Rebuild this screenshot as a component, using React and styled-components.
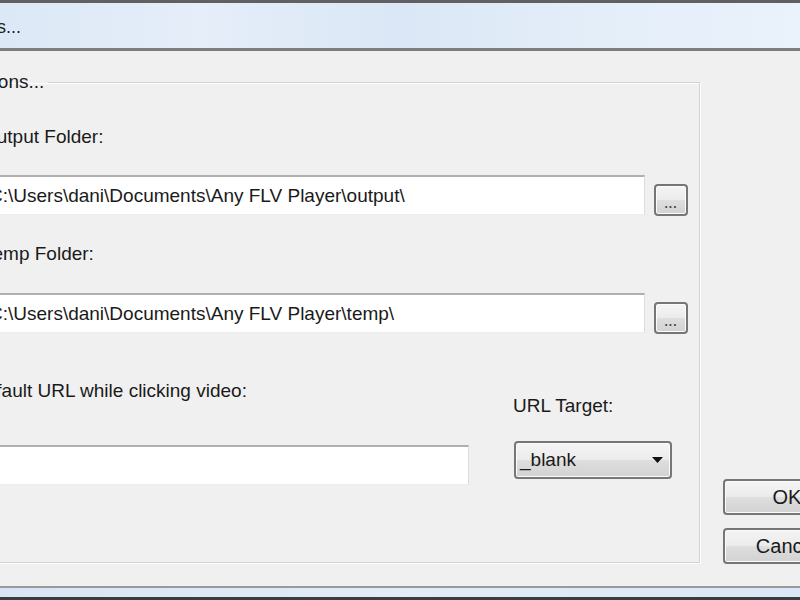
import React from 'react';
import styled, { createGlobalStyle } from 'styled-components';

const Global = createGlobalStyle`
  html, body { margin: 0; padding: 0; background: #f0f0f0; overflow: hidden; }
  body { font-family: "Liberation Sans", Arial, sans-serif; }
  * { box-sizing: border-box; }
`;

const Window = styled.div`
  width: 800px;
  height: 600px;
  overflow: hidden;
  display: flex;
  flex-direction: column;
  background: #f0f0f0;
  color: #1a1a1a;
  font-size: 19px;
`;

const TitleBar = styled.div`
  flex: none;
  height: 51px;
  border-top: 3px solid #606060;
  border-bottom: 3px solid #7e7e7e;
  background: linear-gradient(90deg, #dce8f6 0%, #e5eef9 25%, #dbe7f6 50%, #e4eef9 75%, #eaf2fb 100%);
  display: flex;
  align-items: center;
  white-space: nowrap;
  overflow: hidden;
`;

const TitleText = styled.span`
  margin-left: -56px;
  margin-top: 4px;
  font-size: 18px;
  color: #222;
`;

const Body = styled.div`
  flex: 1;
  display: flex;
  align-items: flex-start;
  padding-top: 20px;
  min-height: 0;
`;

const Group = styled.fieldset`
  flex: none;
  margin: 0 0 0 -40px;
  width: 740px;
  height: 492px;
  min-width: 0;
  padding: 0 12px 0 25px;
  border: 1px solid #d3d3d3;
  box-shadow: inset 1px 1px 0 #fff, 1px 1px 0 #fff;
  display: flex;
  flex-direction: column;
`;

const Legend = styled.legend`
  margin-left: -23px;
  padding: 0 4px 0 0;
  line-height: 22px;
  height: 22px;
  white-space: nowrap;
`;

const Label = styled.div`
  line-height: 22px;
  height: 22px;
  white-space: nowrap;
  margin-left: ${p => p.$indent || 0}px;
  margin-top: ${p => p.$top || 0}px;
`;

const PathRow = styled.div`
  display: flex;
  align-items: flex-start;
  gap: 9px;
  margin-top: ${p => p.$top || 0}px;
`;

const TextBox = styled.input`
  display: block;
  width: ${p => p.$width}px;
  height: 40px;
  margin: 0;
  padding: 0 0 0 2px;
  font: inherit;
  color: #1a1a1a;
  background: #fff;
  border-style: solid;
  border-width: 2px 1px 1px 1px;
  border-color: #b0b0b0 #dcdcdc #ececec #dcdcdc;
  outline: none;
  flex: none;
`;

const Win7Button = styled.button`
  font: inherit;
  color: #1a1a1a;
  border: 2px solid #767676;
  border-radius: 4px;
  background: linear-gradient(180deg, #f4f4f4 0%, #ececec 48%, #dedede 52%, #d2d2d2 100%);
  box-shadow: inset 0 0 0 1px #fbfbfb;
  padding: 0;
  cursor: default;
`;

const BrowseButton = styled(Win7Button)`
  flex: none;
  width: 34px;
  height: 32px;
  margin-top: 9px;
  display: flex;
  align-items: flex-end;
  justify-content: center;
  padding-bottom: 5px;
  font-size: 12px;
  font-weight: bold;
  letter-spacing: 1px;
  line-height: 10px;
  color: #444;
`;

const BottomRow = styled.div`
  display: flex;
  align-items: flex-start;
  margin-top: 46px;
`;

const Column = styled.div`
  display: flex;
  flex-direction: column;
  flex: none;
  width: ${p => p.$width}px;
  margin-left: ${p => p.$left || 0}px;
  margin-top: ${p => p.$top || 0}px;
`;

const Select = styled(Win7Button)`
  width: 158px;
  height: 38px;
  margin-top: 24px;
  display: flex;
  align-items: center;
  justify-content: space-between;
  padding: 0 7px 0 4px;
  text-align: left;
`;

const ButtonColumn = styled.div`
  flex: none;
  display: flex;
  flex-direction: column;
  gap: 13px;
  margin-left: 23px;
  margin-top: 408px;
`;

const DialogButton = styled(Win7Button)`
  width: 128px;
  height: 36px;
  font-size: 20px;
`;

const BottomFrame = styled.div`
  flex: none;
  height: 14px;
  border-top: 2px solid #9a9a9a;
  border-bottom: 3px solid #3c3c3c;
  background: linear-gradient(90deg, #d8e5f4 0%, #e2ecf8 50%, #dbe7f6 100%);
`;

const Arrow = () => (
  <svg width="11" height="6" viewBox="0 0 11 6">
    <path d="M0 0 H11 L5.5 6 Z" fill="#111" />
  </svg>
);

export default function App() {
  return (
    <>
      <Global />
      <Window>
        <TitleBar>
          <TitleText>Options...</TitleText>
        </TitleBar>
        <Body>
          <Group>
            <Legend>Options...</Legend>
            <Label $top={33} $indent={-4}>Output Folder:</Label>
            <PathRow $top={27}>
              <TextBox $width={659} readOnly value={'C:\\Users\\dani\\Documents\\Any FLV Player\\output\\'} />
              <BrowseButton>...</BrowseButton>
            </PathRow>
            <Label $top={27} $indent={-3}>Temp Folder:</Label>
            <PathRow $top={28}>
              <TextBox $width={659} readOnly value={'C:\\Users\\dani\\Documents\\Any FLV Player\\temp\\'} />
              <BrowseButton>...</BrowseButton>
            </PathRow>
            <BottomRow>
              <Column $width={483}>
                <Label $indent={-14}>Default URL while clicking video:</Label>
                <PathRow $top={43}>
                  <TextBox $width={483} readOnly value="" />
                </PathRow>
              </Column>
              <Column $width={158} $left={45} $top={15}>
                <Label $indent={-1}>URL Target:</Label>
                <Select>
                  <span>_blank</span>
                  <Arrow />
                </Select>
              </Column>
            </BottomRow>
          </Group>
          <ButtonColumn>
            <DialogButton>OK</DialogButton>
            <DialogButton>Cancel</DialogButton>
          </ButtonColumn>
        </Body>
        <BottomFrame />
      </Window>
    </>
  );
}
